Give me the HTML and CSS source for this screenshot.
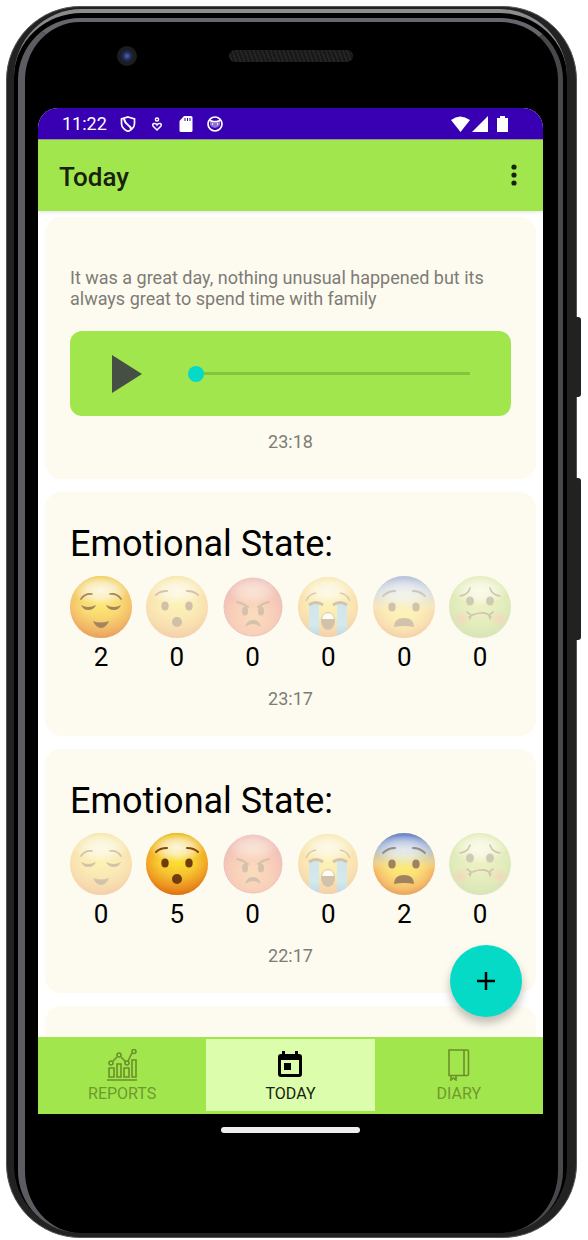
FILE: index.html
```html
<!DOCTYPE html>
<html lang="en">
<head>
<meta charset="utf-8">
<meta name="viewport" content="width=device-width, initial-scale=1">
<title>Today</title>
<link rel="stylesheet" href="styles.css">
</head>
<body>
<svg class="sprite" aria-hidden="true">
  <defs>
    <radialGradient id="gold" cx=".5" cy=".42" r=".6">
      <stop offset="0" stop-color="#ffee35"/><stop offset=".5" stop-color="#fbd338"/><stop offset=".8" stop-color="#f2a126"/><stop offset="1" stop-color="#d96a10"/>
    </radialGradient>
    <linearGradient id="base" x1="0" y1="0" x2="0" y2="1">
      <stop offset="0" stop-color="#e9bd16"/><stop offset=".5" stop-color="#f0b424" stop-opacity=".2"/><stop offset="1" stop-color="#df6c12" stop-opacity=".6"/>
    </linearGradient>
    <radialGradient id="shine" cx=".5" cy=".45" r=".5">
      <stop offset="0" stop-color="#fff" stop-opacity=".85"/><stop offset=".5" stop-color="#fff" stop-opacity=".6"/><stop offset="1" stop-color="#fff" stop-opacity="0"/>
    </radialGradient>
    <radialGradient id="red" cx=".5" cy=".65" r=".6">
      <stop offset="0" stop-color="#f79a4c"/><stop offset=".6" stop-color="#ee6a40"/><stop offset="1" stop-color="#d43a3a"/>
    </radialGradient>
    <linearGradient id="blue" x1="0" y1="0" x2="0" y2="1">
      <stop offset="0" stop-color="#1c46b8"/><stop offset=".25" stop-color="#7b9bd0"/><stop offset=".5" stop-color="#d8cf9a" stop-opacity=".4"/><stop offset=".6" stop-color="#ffe24a" stop-opacity="0"/>
    </linearGradient>
    <radialGradient id="green" cx=".5" cy=".4" r=".6">
      <stop offset="0" stop-color="#d3e373"/><stop offset=".65" stop-color="#a9cd48"/><stop offset="1" stop-color="#7fb43a"/>
    </radialGradient>
    <radialGradient id="cheek">
      <stop offset="0" stop-color="#f47a4a" stop-opacity=".8"/><stop offset="1" stop-color="#f47a4a" stop-opacity="0"/>
    </radialGradient>
    <linearGradient id="tear" x1="0" y1="0" x2="0" y2="1">
      <stop offset="0" stop-color="#6fb8e2"/><stop offset=".6" stop-color="#72c2ea"/><stop offset="1" stop-color="#3788d2"/>
    </linearGradient>
    <clipPath id="face-clip"><circle cx="31" cy="31" r="30"/></clipPath>
  </defs>
  <symbol id="relieved" viewBox="0 0 62 62">
    <circle cx="31" cy="31" r="31" fill="url(#gold)"/><circle cx="31" cy="31" r="31" fill="url(#base)"/>
    <ellipse cx="31" cy="16" rx="28" ry="15" fill="url(#shine)"/>
    <g fill="none" stroke="#75450f" stroke-width="1.700" stroke-linecap="round"><path d="M11 23q4-6 11-5M40 18q7-1 11 5"/></g>
    <g fill="#75450f"><path d="M11 29q7 4 15 0q-2 5-8 5q-5 0-7-5zM36 29q8 4 15 0q-2 5-7 5q-6 0-8-5z"/><path d="M23 45q8 3 16 0q-3 7-8 7t-8-7z"/></g>
  </symbol>
  <symbol id="surprised" viewBox="0 0 62 62">
    <circle cx="31" cy="31" r="31" fill="url(#gold)"/><circle cx="31" cy="31" r="31" fill="url(#base)"/>
    <ellipse cx="31" cy="16" rx="28" ry="15" fill="url(#shine)"/>
    <g fill="none" stroke="#84460b" stroke-width="2" stroke-linecap="round"><path d="M10 19q4-4 11-4M41 15q7 0 11 4"/></g>
    <g fill="#6f3c0c"><ellipse cx="19" cy="30" rx="3.700" ry="4.500"/><ellipse cx="43" cy="30" rx="3.700" ry="4.500"/><ellipse cx="31" cy="46" rx="5" ry="5"/></g>
  </symbol>
  <symbol id="angry" viewBox="0 0 62 62">
    <circle cx="31" cy="31" r="29" fill="url(#red)" stroke="#c93943"/>
    <ellipse cx="31" cy="15" rx="26" ry="14" fill="url(#shine)" opacity=".6"/>
    <g fill="none" stroke="#74401c" stroke-width="2" stroke-linecap="round"><path d="M15 26q6 1 11 5M47 26q-6 1-11 5"/></g>
    <g fill="#74401c"><ellipse cx="23" cy="35" rx="3" ry="4.500"/><ellipse cx="39" cy="35" rx="3" ry="4.500"/><path d="M23 51q2-7 8-7t8 7q-8-6-16 0z"/></g>
  </symbol>
  <symbol id="crying" viewBox="0 0 62 62">
    <circle cx="31" cy="31" r="30" fill="url(#gold)"/><circle cx="31" cy="31" r="30" fill="url(#base)"/>
    <ellipse cx="31" cy="16" rx="27" ry="15" fill="url(#shine)"/>
    <path clip-path="url(#face-clip)" d="M12 28h10v34H12zM40 28h10v34H40z" fill="url(#tear)"/>
    <path d="M12 29q7-5 14 0M36 29q7-5 14 0" fill="none" stroke="#74451a" stroke-width="3"/>
    <path d="M9 25q3-7 10-8M43 17q7 1 10 8" fill="none" stroke="#8b5718" stroke-width="1.600"/>
    <ellipse cx="31" cy="45" rx="7" ry="9" fill="#704015"/><path d="M25 43q1-6 6-6t6 6z" fill="#fff"/>
  </symbol>
  <symbol id="fearful" viewBox="0 0 62 62">
    <circle cx="31" cy="31" r="31" fill="url(#gold)"/><circle cx="31" cy="31" r="31" fill="url(#blue)"/>
    <ellipse cx="31" cy="18" rx="29" ry="15" fill="url(#shine)" opacity=".8"/>
    <g fill="none" stroke="#5d5143" stroke-width="1.800" stroke-linecap="round"><path d="M10 20q5-5 12-5M40 15q7 0 12 5"/></g>
    <g fill="#704315"><ellipse cx="19" cy="31" rx="3.700" ry="4.500"/><ellipse cx="43" cy="31" rx="3.700" ry="4.500"/><path d="M21 51q0-9 10-9t10 9q-5-1-10-1t-10 1z"/></g>
  </symbol>
  <symbol id="nauseated" viewBox="0 0 62 62">
    <circle cx="31" cy="31" r="31" fill="url(#green)"/>
    <ellipse cx="31" cy="16" rx="27" ry="15" fill="url(#shine)"/>
    <circle cx="12" cy="43" r="9" fill="url(#cheek)"/><circle cx="50" cy="43" r="9" fill="url(#cheek)"/>
    <g fill="none" stroke="#60531f" stroke-width="1.600" stroke-linecap="round"><path d="M11 20q8-1 10-8M41 12q2 7 10 8M20 41q4-3 11-4t11 4M18 36l4 3-1 4M44 36l-4 3 1 4"/></g>
    <g fill="#69602c"><ellipse cx="21" cy="25" rx="4" ry="4.500"/><ellipse cx="41" cy="25" rx="4" ry="4.500"/></g>
  </symbol>
</svg>

<div class="phone">
  <span class="side-key side-key-power"></span>
  <span class="side-key side-key-volume"></span>
  <div class="rim">
    <div class="glass">
      <div class="forehead">
        <span class="camera"></span>
        <span class="speaker"></span>
      </div>
      <div class="screen">
        <div class="status-bar">
          <span class="clock">11:22</span>
          <svg class="status-icon" viewBox="0 0 16 16"><path d="M8 1l6.500 2v4.500q0 5-6.500 8q-6.500-3-6.500-8V3z" fill="none" stroke="#fff" stroke-width="1.700"/><path d="M4 3q1 4 4 6t3 4" fill="none" stroke="#fff" stroke-width="2"/></svg>
          <svg class="status-icon" viewBox="0 0 16 16"><g fill="none" stroke="#fff" stroke-width="1.500"><circle cx="8" cy="3.500" r="1.600"/><path d="M8 14L4 10q-1-2 1-2.500t3 1.500q1-2 3-1.500t1 2.500z"/></g></svg>
          <svg class="status-icon" viewBox="0 0 16 16"><path d="M6 0h7q1.500 0 1.500 1.500v13q0 1.500-1.500 1.500H3q-1.500 0-1.500-1.500V5z" fill="#fff"/><path d="M7 2v3M9.500 2v3M12 2v3" stroke="#3900b3"/></svg>
          <svg class="status-icon" viewBox="0 0 16 16"><circle cx="8" cy="8" r="7" fill="none" stroke="#fff" stroke-width="1.700"/><path d="M3 4l3 1h4l3-1v5q-2 3-5 3t-5-3z" fill="#fff" fill-opacity=".45"/><path d="M2 4l4 1.500h4L14 4" fill="none" stroke="#fff" stroke-width="1.500"/><path d="M5 8h1M10 8h1" stroke="#fff" stroke-width="1.500"/></svg>
          <span class="spacer"></span>
          <svg class="signals" viewBox="0 0 57 16"><path d="M0 4q9-7 19 0L9.500 16z M21 16L37 0v16z M46 2h3V0h5v2h3v14H46z" fill="#fff"/></svg>
        </div>
        <header class="app-bar">
          <h1 class="app-title">Today</h1>
          <button class="menu-button" aria-label="More options"><svg viewBox="0 0 6 22"><circle cx="3" cy="3" r="2.600"/><circle cx="3" cy="11" r="2.600"/><circle cx="3" cy="19" r="2.600"/></svg></button>
        </header>
        <main class="feed">
          <article class="card card-note">
            <p class="note">It was a great day, nothing unusual happened but its always great to spend time with family</p>
            <div class="player">
              <button class="play-button" aria-label="Play"><svg viewBox="0 0 30 38"><path d="M0 0l30 19L0 38z" fill="#464f43"/></svg></button>
              <input class="seek" type="range" min="0" max="100" value="0" aria-label="Playback position">
            </div>
            <time class="time">23:18</time>
          </article>
          <article class="card">
            <h2 class="card-title">Emotional State:</h2>
            <ul class="moods">
              <li class="mood mood-some"><svg class="face"><use href="#relieved"/></svg>2</li>
              <li class="mood"><svg class="face"><use href="#surprised"/></svg>0</li>
              <li class="mood"><svg class="face"><use href="#angry"/></svg>0</li>
              <li class="mood"><svg class="face"><use href="#crying"/></svg>0</li>
              <li class="mood"><svg class="face"><use href="#fearful"/></svg>0</li>
              <li class="mood"><svg class="face"><use href="#nauseated"/></svg>0</li>
            </ul>
            <time class="time">23:17</time>
          </article>
          <article class="card">
            <h2 class="card-title">Emotional State:</h2>
            <ul class="moods">
              <li class="mood"><svg class="face"><use href="#relieved"/></svg>0</li>
              <li class="mood mood-full"><svg class="face"><use href="#surprised"/></svg>5</li>
              <li class="mood"><svg class="face"><use href="#angry"/></svg>0</li>
              <li class="mood"><svg class="face"><use href="#crying"/></svg>0</li>
              <li class="mood mood-some"><svg class="face"><use href="#fearful"/></svg>2</li>
              <li class="mood"><svg class="face"><use href="#nauseated"/></svg>0</li>
            </ul>
            <time class="time">22:17</time>
          </article>
          <article class="card card-next"></article>
        </main>
        <button class="fab" aria-label="Add entry"><svg viewBox="0 0 18 18"><path d="M9 0v18M0 9h18" stroke="#000" stroke-width="2.500"/></svg></button>
        <nav class="tabs">
          <a class="tab" href="#reports">
            <svg class="tab-icon" viewBox="0 0 32 32" fill="none" stroke="#6b8f29" stroke-width="1.600"><path d="M1 31h30M3 19h5v9H3zM11 15h4v13h-4zM18 19h5v9h-5zM26 11h4v17h-4zM7 12l4-4M15 8l5 5M22 12l4-8"/><circle cx="5" cy="14" r="2"/><circle cx="13" cy="6" r="2"/><circle cx="21" cy="14" r="2"/><circle cx="28" cy="2.500" r="2"/></svg>
            REPORTS
          </a>
          <a class="tab tab-active" href="#today" aria-current="page">
            <svg class="tab-icon" viewBox="0 0 32 32"><path d="M8 2h3v3h10V2h3v3h1q3 0 3 3v17q0 3-3 3H7q-3 0-3-3V8q0-3 3-3h1zM7 11v14h18V11zM10 14h7v7h-7z" fill="#000" fill-rule="evenodd"/></svg>
            TODAY
          </a>
          <a class="tab" href="#diary">
            <svg class="tab-icon" viewBox="0 0 32 32" fill="none" stroke="#6b8f29" stroke-width="1.600"><path d="M6 1h18q1.500 0 1.500 1.500V25q0 1.500-1.500 1.500H6zM21 1v25M8 27v4l2.500-2 2.500 2v-4"/></svg>
            DIARY
          </a>
        </nav>
      </div>
      <div class="chin"><span class="home-bar"></span></div>
    </div>
  </div>
</div>
</body>
</html>
```
FILE: styles.css
```css
* { box-sizing: border-box; }

body {
  margin: 0;
  padding: 6px 11px 2px 6px;
  height: 100vh;
  background: #fff;
  font-family: Roboto, "Liberation Sans", sans-serif;
  color: #000;
}

button {
  border: 0;
  padding: 0;
  background: none;
  cursor: pointer;
}

.sprite { position: absolute; width: 0; height: 0; }

/* Device */
.phone {
  position: relative;
  height: 100%;
  padding: 2px 9px 4px 7px;
  border: 1px solid #555;
  border-radius: 74px;
  background: #222;
}

.rim {
  height: 100%;
  padding: 5px 4px 0;
  border-top: 4px solid #8c8c8e;
  border-radius: 68px;
  background: #000;
}

.glass {
  display: flex;
  flex-direction: column;
  height: 100%;
  padding: 0 15px 0 13px;
  border: solid #66666c;
  border-width: 4px 5px 0 7px;
  border-right-color: #48484c;
  border-left-color: #5c5c62;
  border-radius: 62px;
  background: #000;
}

.side-key {
  position: absolute;
  left: 100%;
  width: 5px;
  border-radius: 0 3px 3px 0;
  background: #222;
}

.side-key-power { top: 310px; height: 80px; }
.side-key-volume { top: 471px; height: 162px; }

.forehead {
  display: grid;
  grid-template-columns: 1fr 124px 1fr;
  align-items: center;
  flex: none;
  height: 86px;
  padding-bottom: 18px;
}

.camera {
  width: 20px;
  height: 20px;
  margin-left: 79px;
  border: 4px solid #1d1d20;
  border-radius: 50%;
  background: radial-gradient(#46589a 0 12%, #202b58 45%, #11162e);
}

.speaker {
  grid-column: 2;
  height: 12px;
  border-radius: 6px;
  background: repeating-linear-gradient(70deg, #181818 0 2px, #232423 2px 4px);
}

.screen {
  position: relative;
  display: flex;
  flex-direction: column;
  flex: 1;
  min-height: 0;
  overflow: hidden;
  border-radius: 20px 20px 0 0;
  background: #fff;
}

.chin {
  display: flex;
  justify-content: center;
  flex: none;
  height: 119px;
  padding-top: 13px;
}

.home-bar {
  width: 139px;
  height: 6px;
  border-radius: 3px;
  background: #eee;
}

/* Status bar */
.status-bar {
  display: flex;
  align-items: center;
  gap: 13px;
  flex: none;
  height: 32px;
  padding: 0 35px 0 24px;
  border-bottom: 1px solid #999;
  background: #3900b3;
}

.clock { font-size: 18px; color: #fff; }
.status-icon { width: 16px; height: 16px; }
.spacer { flex: 1; }
.signals { width: 57px; height: 16px; }

/* App bar */
.app-bar {
  z-index: 1;
  display: flex;
  align-items: center;
  justify-content: space-between;
  flex: none;
  height: 71px;
  padding: 2px 16px 0 21px;
  background: #a2e64e;
  box-shadow: 0 1px 4px rgba(0, 0, 0, .12);
}

.app-title {
  margin: 0;
  font-size: 26px;
  font-weight: 500;
  color: #18220c;
}

.menu-button { width: 26px; height: 40px; }
.menu-button svg { width: 6px; height: 22px; fill: #18220c; }

/* Feed */
.feed {
  display: flex;
  flex-direction: column;
  gap: 13px;
  flex: 1;
  min-height: 0;
  overflow: hidden;
  padding: 6px 7px 0;
}

.card {
  flex: none;
  padding: 31px 25px 27px;
  border-radius: 16px;
  background: #fdfbef;
}

.card-note { padding-top: 50px; }
.card-next { height: 240px; }

.note {
  margin: 0 0 22px;
  font-size: 18px;
  line-height: 21px;
  color: #7d7c76;
}

.player {
  display: flex;
  align-items: center;
  gap: 46px;
  height: 85px;
  padding: 0 33px 0 42px;
  border-radius: 12px;
  background: #a2e64e;
}

.play-button { width: 30px; height: 38px; }
.play-button svg { display: block; width: 30px; height: 38px; }

.seek {
  flex: 1;
  min-width: 0;
  height: 16px;
  margin: 0;
  appearance: none;
  background: linear-gradient(#87c343, #87c343) center / calc(100% - 16px) 3px no-repeat;
}

.seek::-webkit-slider-thumb {
  width: 16px;
  height: 16px;
  appearance: none;
  border-radius: 50%;
  background: #05dac7;
}

.time {
  display: block;
  margin-top: 15px;
  font-size: 18px;
  line-height: 21px;
  text-align: center;
  color: #7d7c76;
}

.card-title {
  margin: 0 0 11px;
  font-size: 36px;
  font-weight: 400;
  line-height: 42px;
}

.moods {
  display: flex;
  justify-content: space-between;
  margin: 0;
  padding: 0;
  list-style: none;
}

.mood {
  display: flex;
  flex-direction: column;
  align-items: center;
  gap: 4px;
  font-size: 26px;
  line-height: 31px;
}

.face { width: 62px; height: 62px; opacity: .3; }
.mood-some .face { opacity: .65; }
.mood-full .face { opacity: 1; }

.fab {
  position: absolute;
  right: 21px;
  bottom: 97px;
  display: grid;
  place-items: center;
  width: 72px;
  height: 72px;
  border-radius: 50%;
  background: #05dac7;
  box-shadow: 0 6px 10px rgba(0, 0, 0, .25);
}

.fab svg { width: 18px; height: 18px; }

/* Bottom navigation */
.tabs {
  z-index: 1;
  display: grid;
  grid-template-columns: repeat(3, 1fr);
  flex: none;
  height: 77px;
  padding: 2px 0 3px;
  background: #a2e64e;
}

.tab {
  display: flex;
  flex-direction: column;
  align-items: center;
  gap: 3px;
  padding-top: 10px;
  font-size: 16px;
  line-height: 19px;
  text-decoration: none;
  color: #6f992e;
}

.tab-active { background: #dbfdac; color: #18220c; }
.tab-icon { width: 32px; height: 32px; }
```
